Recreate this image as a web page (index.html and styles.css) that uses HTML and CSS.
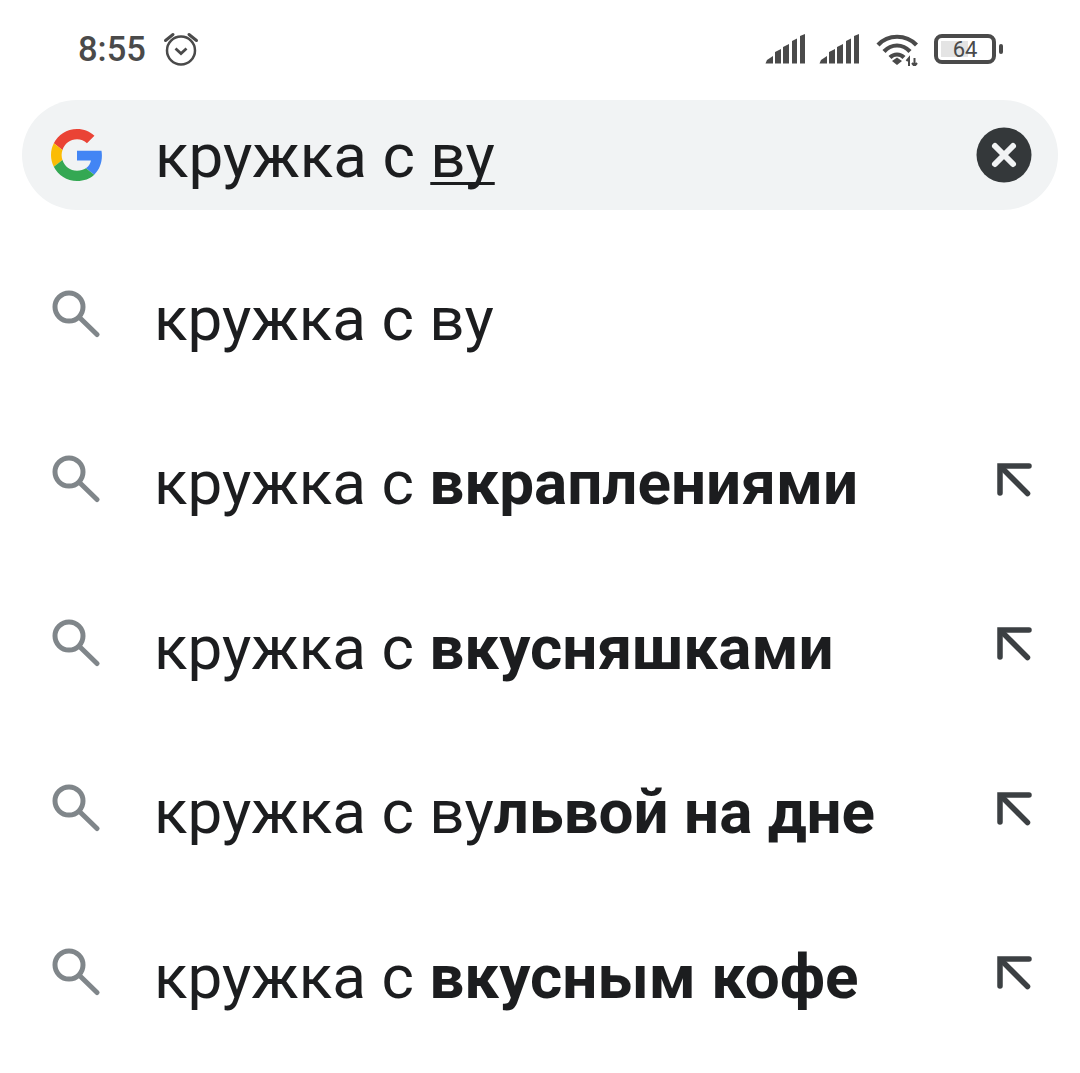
FILE: index.html
```html
<!DOCTYPE html>
<html lang="ru">
<head>
    <meta charset="UTF-8">
    <meta name="viewport" content="width=device-width, initial-scale=1.0">
    <title>Поиск</title>
    <link rel="stylesheet" href="styles.css">
</head>

<body>

    <svg width="0" height="0" class="defs">
        <symbol id="search-icon" viewBox="0 0 48 48">
            <circle cx="17" cy="17" r="14" fill="none" stroke="#80868a" stroke-width="5"/>
            <path d="M28 28L45 44.500" fill="none" stroke="#80868a" stroke-width="5" stroke-linecap="round"/>
        </symbol>
        <symbol id="arrow-icon" viewBox="0 0 36 36">
            <path d="M32 3H3V30" fill="none" stroke="#3c4043" stroke-width="5.500" stroke-linecap="round"/>
            <path d="M4.500 4.500L30.500 30.500" fill="none" stroke="#3c4043" stroke-width="5.500" stroke-linecap="round"/>
        </symbol>
        <symbol id="signal-icon" viewBox="0 0 41 30">
            <path d="M0.500 29.500L2 26L8 22V29.500ZM10 29.500V18L16 15V29.500ZM18 29.500V13L24 10V29.500ZM27 29.500V7L32 4.500V29.500ZM35 29.500V2L40 0V29.500Z" fill="#4a4a4a"/>
        </symbol>
    </svg>

    <div class="status-bar">
        <div class="status-left">
            <span class="time">8:55</span>
            <svg class="alarm" width="36" height="36" viewBox="0 0 36 36">
                <circle cx="18" cy="19.500" r="14" fill="none" stroke="#4a4a4a" stroke-width="2.500"/>
                <path d="M12.500 17.500L18 22.500L23.500 17.500" fill="none" stroke="#4a4a4a" stroke-width="2.800"/>
                <path d="M2.500 9.500L10 3.500M33.500 9.500L26 3.500" fill="none" stroke="#4a4a4a" stroke-width="3" stroke-linecap="round"/>
            </svg>
        </div>
        <div class="status-right">
            <svg class="signal" width="41" height="30"><use href="#signal-icon"/></svg>
            <svg class="signal second" width="41" height="30"><use href="#signal-icon"/></svg>
            <svg class="wifi" width="43" height="33" viewBox="0 0 43 33">
                <path d="M2 12C12 1 30 1 40.500 12M8 18.500C15.500 10.500 26.500 10.500 34 18.500M14 24.500C18 20.500 24 20.500 28 24.500" fill="none" stroke="#4a4a4a" stroke-width="4.200"/>
                <path d="M16 28L21 24.500L26 28L21 32Z" fill="#4a4a4a"/>
                <path d="M33 33V25M30.500 28L33 25V33M38.500 25V33M38.500 33L41 30M38.500 33L36 30" fill="none" stroke="#4a4a4a" stroke-width="2"/>
            </svg>
            <div class="battery">
                <div class="battery-body">
                    <div class="battery-fill"></div>
                    <span class="battery-num">64</span>
                </div>
                <div class="battery-tip"></div>
            </div>
        </div>
    </div>

    <div class="search-bar">
        <svg class="g-logo" width="52" height="52" viewBox="0 0 48 48">
            <path d="M24 9.500c3.500 0 6.700 1.200 9.200 3.600l6.900-6.900C35.900 2.400 30.500 0 24 0 14.600 0 6.500 5.400 2.600 13.200l8 6.200C12.400 13.600 17.700 9.500 24 9.500z" fill="#ea4335"/>
            <path d="M47 24.500c0-1.600-.2-3.100-.4-4.500H24v9h12.900c-.6 3-2.200 5.500-4.700 7.200l7.700 6C44.400 37.900 47 31.800 47 24.500z" fill="#4285f4"/>
            <path d="M10.600 28.600c-.5-1.400-.8-3-.8-4.600s.3-3.200.8-4.600l-8-6.200C.9 16.500 0 20.100 0 24s.9 7.500 2.600 10.800l8-6.200z" fill="#fbbc05"/>
            <path d="M24 48c6.500 0 11.900-2.100 15.900-5.800l-7.700-6c-2.200 1.500-4.900 2.300-8.200 2.300-6.300 0-11.600-4.100-13.400-9.900l-8 6.200C6.500 42.600 14.600 48 24 48z" fill="#34a853"/>
        </svg>
        <span class="query">кружка с <span class="typed">ву</span></span>
        <svg class="clear" width="56" height="56" viewBox="0 0 56 56">
            <circle cx="28" cy="28" r="27.500" fill="#34383a"/>
            <path d="M19 19L37 37M37 19L19 37" fill="none" stroke="#f1f3f4" stroke-width="6" stroke-linecap="round"/>
        </svg>
    </div>

    <div class="suggestions">
        <div class="row">
            <svg class="search-icon" width="48" height="48"><use href="#search-icon"/></svg>
            <span class="text">кружка с ву</span>
        </div>
        <div class="row">
            <svg class="search-icon" width="48" height="48"><use href="#search-icon"/></svg>
            <span class="text">кружка с <b>вкраплениями</b></span>
            <svg class="arrow" width="36" height="36"><use href="#arrow-icon"/></svg>
        </div>
        <div class="row">
            <svg class="search-icon" width="48" height="48"><use href="#search-icon"/></svg>
            <span class="text">кружка с <b>вкусняшками</b></span>
            <svg class="arrow" width="36" height="36"><use href="#arrow-icon"/></svg>
        </div>
        <div class="row">
            <svg class="search-icon" width="48" height="48"><use href="#search-icon"/></svg>
            <span class="text">кружка с ву<b>львой на дне</b></span>
            <svg class="arrow" width="36" height="36"><use href="#arrow-icon"/></svg>
        </div>
        <div class="row">
            <svg class="search-icon" width="48" height="48"><use href="#search-icon"/></svg>
            <span class="text">кружка с <b>вкусным кофе</b></span>
            <svg class="arrow" width="36" height="36"><use href="#arrow-icon"/></svg>
        </div>
    </div>

</body>

</html>
```

FILE: styles.css
```css
body {
    margin: 0;
    background-color: #fff;
    font-family: Roboto, "Liberation Sans", sans-serif;
    color: #1c1d1f;
    overflow: hidden;
}

.defs {
    position: absolute;
}

.status-bar {
    height: 98px;
    padding: 0 77px 2px 78px;
    display: flex;
    justify-content: space-between;
    align-items: center;
    color: #4a4a4a;
}

.status-left,
.status-right {
    display: flex;
    align-items: center;
}

.time {
    font-size: 34.500px;
    font-weight: 500;
}

.alarm {
    margin-left: 17px;
}

.signal.second {
    margin-left: 13px;
}

.wifi {
    margin-left: 16px;
}

.battery {
    display: flex;
    align-items: center;
    margin-left: 15px;
}

.battery-body {
    width: 62px;
    height: 30px;
    box-sizing: border-box;
    border: 4px solid #4a4a4a;
    border-radius: 8px;
    display: flex;
    align-items: center;
    justify-content: center;
    position: relative;
}

.battery-fill {
    position: absolute;
    left: 3px;
    top: 3px;
    bottom: 3px;
    width: 27px;
    background-color: #e4e4e4;
}

.battery-num {
    position: relative;
    font-size: 22px;
}

.battery-tip {
    width: 4px;
    height: 10px;
    margin-left: 3px;
    background-color: #4a4a4a;
    border-radius: 2px;
}

.search-bar {
    height: 110px;
    margin: 0 22px;
    border-radius: 55px;
    background-color: #f1f3f4;
    display: flex;
    align-items: center;
    padding: 0 26px 0 29px;
}

.g-logo {
    flex: none;
}

.query {
    margin-left: 52px;
    font-size: 62px;
}

.typed {
    text-decoration: underline;
    text-decoration-thickness: 3px;
    text-decoration-skip-ink: none;
    text-underline-offset: 5px;
}

.clear {
    margin-left: auto;
}

.suggestions {
    margin-top: 28px;
}

.row {
    height: 164.500px;
    display: flex;
    align-items: center;
    padding: 0 47px 0 52px;
}

.search-icon {
    flex: none;
    margin-top: -12px;
}

.text {
    margin-left: 54px;
    margin-top: -4px;
    font-size: 62px;
}

.text b {
    font-weight: 700;
}

.arrow {
    margin-left: auto;
    margin-top: -8px;
}
```
